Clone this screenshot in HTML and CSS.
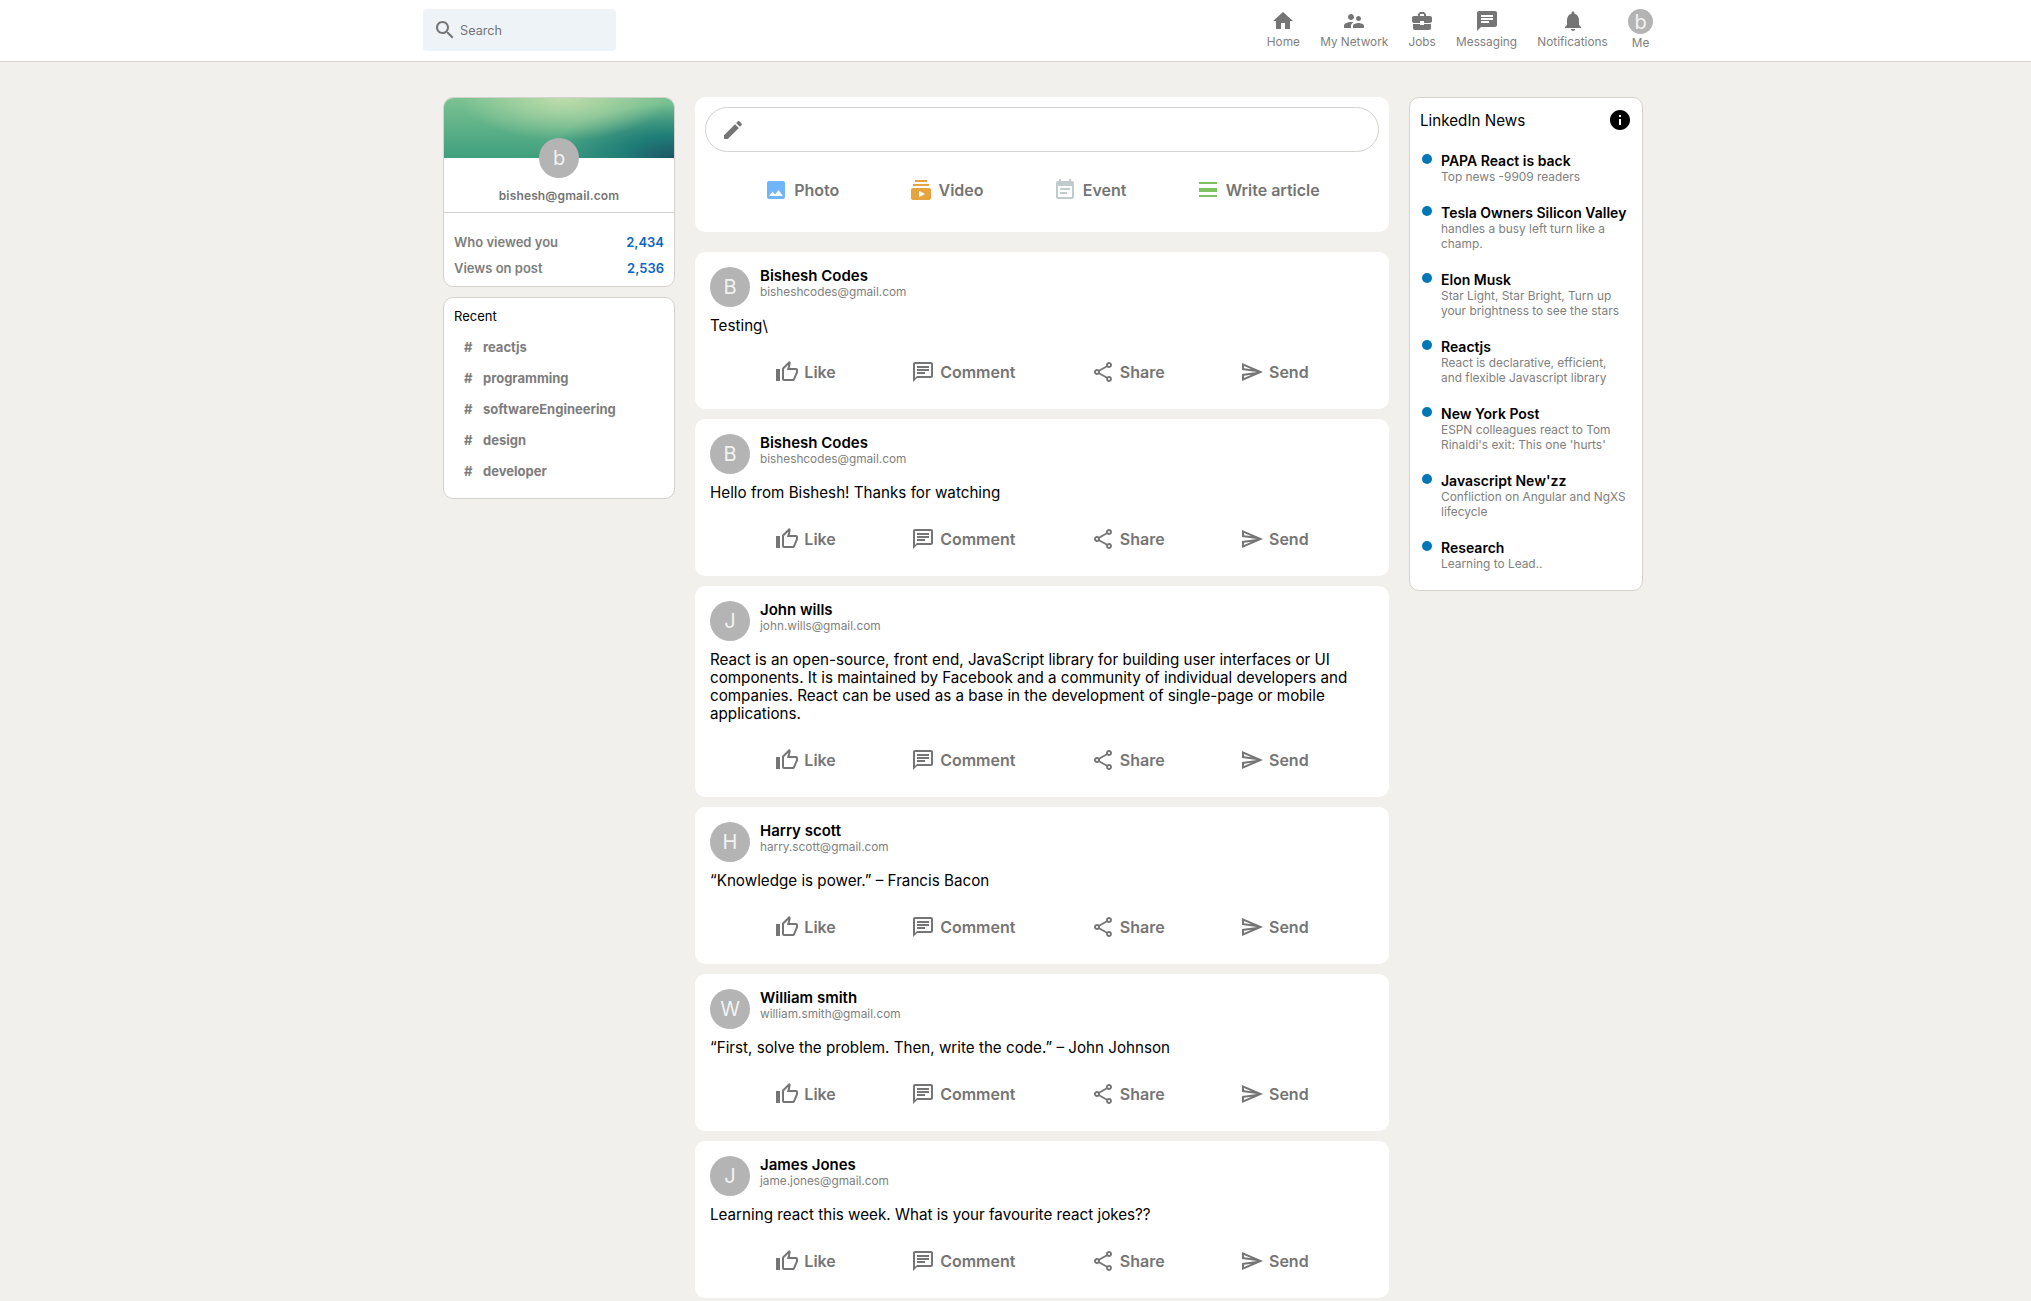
FILE: index.html
```html
<!DOCTYPE html>
<html lang="en">
<head>
<meta charset="UTF-8">
<meta name="viewport" content="width=device-width, initial-scale=1.0">
<title>LinkedIn</title>
<link rel="stylesheet" href="styles.css">
</head>
<body>
  <svg class="sprite" width="0" height="0">
    <symbol id="i-search" viewBox="0 0 24 24"><path d="M15.5 14h-.79l-.28-.27C15.41 12.59 16 11.11 16 9.5 16 5.91 13.09 3 9.5 3S3 5.91 3 9.5 5.91 16 9.5 16c1.61 0 3.09-.59 4.23-1.57l.27.28v.79l5 4.99L20.49 19l-4.99-5zm-6 0C7.01 14 5 11.99 5 9.5S7.01 5 9.5 5 14 7.01 14 9.5 11.99 14 9.5 14z"/></symbol>
    <symbol id="i-home" viewBox="0 0 24 24"><path d="M10 20v-6h4v6h5v-8h3L12 3 2 12h3v8z"/></symbol>
    <symbol id="i-network" viewBox="0 0 24 24"><path d="M16.5 12c1.38 0 2.49-1.12 2.49-2.5S17.88 7 16.5 7C15.12 7 14 8.12 14 9.5s1.12 2.5 2.5 2.5zM9 11c1.66 0 2.99-1.34 2.99-3S10.66 5 9 5C7.34 5 6 6.34 6 8s1.34 3 3 3zm7.5 3c-1.83 0-5.5.92-5.5 2.75V19h11v-2.25c0-1.83-3.67-2.75-5.5-2.75zM9 13c-2.33 0-7 1.17-7 3.5V19h7v-2.25c0-.85.33-2.34 2.37-3.47C10.5 13.1 9.66 13 9 13z"/></symbol>
    <symbol id="i-jobs" viewBox="0 0 24 24"><path d="M10 16v-1H3.01L3 19c0 1.11.89 2 2 2h14c1.11 0 2-.89 2-2v-4h-7v1h-4zm10-9h-4.01V5l-2-2h-4l-2 2v2H4c-1.1 0-2 .9-2 2v3c0 1.11.89 2 2 2h6v-2h4v2h6c1.1 0 2-.9 2-2V9c0-1.1-.9-2-2-2zm-6 0h-4V5h4v2z"/></symbol>
    <symbol id="i-chat" viewBox="0 0 24 24"><path d="M20 2H4c-1.1 0-1.99.9-1.99 2L2 22l4-4h14c1.1 0 2-.9 2-2V4c0-1.1-.9-2-2-2zM6 9h12v2H6V9zm8 5H6v-2h8v2zm4-6H6V6h12v2z"/></symbol>
    <symbol id="i-bell" viewBox="0 0 24 24"><path d="M12 22c1.1 0 2-.9 2-2h-4c0 1.1.89 2 2 2zm6-6v-5c0-3.07-1.64-5.64-4.5-6.32V4c0-.83-.67-1.5-1.5-1.5s-1.5.67-1.5 1.5v.68C7.63 5.36 6 7.92 6 11v5l-2 2v1h16v-1l-2-2z"/></symbol>
    <symbol id="i-create" viewBox="0 0 24 24"><path d="M3 17.25V21h3.75L17.81 9.94l-3.75-3.75L3 17.25zM20.71 7.04c.39-.39.39-1.02 0-1.41l-2.34-2.34c-.39-.39-1.02-.39-1.41 0l-1.83 1.83 3.75 3.75 1.83-1.83z"/></symbol>
    <symbol id="i-photo" viewBox="0 0 24 24"><path d="M21 19V5c0-1.1-.9-2-2-2H5c-1.1 0-2 .9-2 2v14c0 1.1.9 2 2 2h14c1.1 0 2-.9 2-2zM8.5 13.5l2.5 3.01L14.5 12l4.5 6H5l3.5-4.5z"/></symbol>
    <symbol id="i-video" viewBox="0 0 24 24"><path d="M20 8H4V6h16v2zm-2-6H6v2h12V2zm4 10v8c0 1.1-.9 2-2 2H4c-1.1 0-2-.9-2-2v-8c0-1.1.9-2 2-2h16c1.1 0 2 .9 2 2zm-6 4l-6-3.27v6.53L16 16z"/></symbol>
    <symbol id="i-event" viewBox="0 0 24 24"><path d="M17 10H7v2h10v-2zm2-7h-1V1h-2v2H8V1H6v2H5c-1.11 0-1.99.9-1.99 2L3 19c0 1.1.89 2 2 2h14c1.1 0 2-.9 2-2V5c0-1.1-.9-2-2-2zm0 16H5V8h14v11zm-5-5H7v2h7v-2z"/></symbol>
    <symbol id="i-article" viewBox="0 0 24 24"><path d="M3 17h18v2H3zm0-7h18v4H3zm0-6h18v2H3z"/></symbol>
    <symbol id="i-info" viewBox="0 0 24 24"><path d="M12 2C6.48 2 2 6.48 2 12s4.48 10 10 10 10-4.48 10-10S17.52 2 12 2zm1 15h-2v-6h2v6zm0-8h-2V7h2v2z"/></symbol>
    <symbol id="i-like" viewBox="0 0 24 24"><path d="M9 21h9c.83 0 1.54-.5 1.84-1.22l3.02-7.05c.09-.23.14-.47.14-.73v-2c0-1.1-.9-2-2-2h-6.31l.95-4.57.03-.32c0-.41-.17-.79-.44-1.06L14.17 1 7.58 7.59C7.22 7.95 7 8.45 7 9v10c0 1.1.9 2 2 2zM9 9l4.34-4.34L12 10h9v2l-3 7H9V9zM1 9h4v12H1z"/></symbol>
    <symbol id="i-comment" viewBox="0 0 24 24"><path d="M20 2H4c-1.1 0-2 .9-2 2v18l4-4h14c1.1 0 2-.9 2-2V4c0-1.1-.9-2-2-2zm0 14H6l-2 2V4h16v12zM6 12h8v2H6zm0-3h12v2H6zm0-3h12v2H6z"/></symbol>
    <symbol id="i-share" viewBox="0 0 24 24"><path d="M18 16.08c-.76 0-1.44.3-1.96.77L8.91 12.7c.05-.23.09-.46.09-.7s-.04-.47-.09-.7l7.05-4.11c.54.5 1.25.81 2.04.81 1.66 0 3-1.34 3-3s-1.34-3-3-3-3 1.34-3 3c0 .24.04.47.09.7L8.04 9.81C7.5 9.31 6.79 9 6 9c-1.66 0-3 1.34-3 3s1.34 3 3 3c.79 0 1.5-.31 2.04-.81l7.12 4.16c-.05.21-.08.43-.08.65 0 1.61 1.31 2.92 2.92 2.92 1.61 0 2.92-1.31 2.92-2.92s-1.31-2.92-2.92-2.92zM18 4c.55 0 1 .45 1 1s-.45 1-1 1-1-.45-1-1 .45-1 1-1zM6 13c-.55 0-1-.45-1-1s.45-1 1-1 1 .45 1 1-.45 1-1 1zm12 7.02c-.55 0-1-.45-1-1s.45-1 1-1 1 .45 1 1-.45 1-1 1z"/></symbol>
    <symbol id="i-send" viewBox="0 0 24 24"><path d="M4.01 6.03l7.51 3.22-7.52-1 .01-2.22m7.5 8.72L4 17.97v-2.22l7.51-1M2.01 3L2 10l15 2-15 2 .01 7L23 12 2.01 3z"/></symbol>
  </svg>

  <header class="header">
    <div class="search">
      <svg class="icon"><use href="#i-search"/></svg>
      <span>Search</span>
    </div>
    <nav class="nav">
      <a class="nav-item"><svg class="icon"><use href="#i-home"/></svg><span>Home</span></a>
      <a class="nav-item"><svg class="icon"><use href="#i-network"/></svg><span>My Network</span></a>
      <a class="nav-item"><svg class="icon"><use href="#i-jobs"/></svg><span>Jobs</span></a>
      <a class="nav-item"><svg class="icon"><use href="#i-chat"/></svg><span>Messaging</span></a>
      <a class="nav-item"><svg class="icon"><use href="#i-bell"/></svg><span>Notifications</span></a>
      <a class="nav-item"><div class="avatar avatar-nav">b</div><span>Me</span></a>
    </nav>
  </header>

  <main class="app">
    <aside class="sidebar">
      <div class="card profile">
        <div class="banner"></div>
        <div class="avatar avatar-profile">b</div>
        <h4 class="profile-email">bishesh@gmail.com</h4>
        <div class="stats">
          <div class="stat"><span>Who viewed you</span><b>2,434</b></div>
          <div class="stat"><span>Views on post</span><b>2,536</b></div>
        </div>
      </div>
      <div class="card recent">
        <p class="recent-title">Recent</p>
        <div class="recent-item"><span class="hash">#</span><span>reactjs</span></div>
        <div class="recent-item"><span class="hash">#</span><span>programming</span></div>
        <div class="recent-item"><span class="hash">#</span><span>softwareEngineering</span></div>
        <div class="recent-item"><span class="hash">#</span><span>design</span></div>
        <div class="recent-item"><span class="hash">#</span><span>developer</span></div>
      </div>
    </aside>

    <section class="feed">
      <div class="composer">
        <div class="composer-input"><svg class="icon"><use href="#i-create"/></svg></div>
        <div class="composer-options">
          <div class="option"><svg class="icon photo"><use href="#i-photo"/></svg><span>Photo</span></div>
          <div class="option"><svg class="icon video"><use href="#i-video"/></svg><span>Video</span></div>
          <div class="option"><svg class="icon event"><use href="#i-event"/></svg><span>Event</span></div>
          <div class="option"><svg class="icon article"><use href="#i-article"/></svg><span>Write article</span></div>
        </div>
      </div>

      <article class="post">
        <div class="post-header">
          <div class="avatar">B</div>
          <div class="post-info"><h2>Bishesh Codes</h2><p>bisheshcodes@gmail.com</p></div>
        </div>
        <p class="post-body">Testing\</p>
        <div class="post-actions">
          <div class="action"><svg class="icon"><use href="#i-like"/></svg><span>Like</span></div>
          <div class="action"><svg class="icon"><use href="#i-comment"/></svg><span>Comment</span></div>
          <div class="action"><svg class="icon"><use href="#i-share"/></svg><span>Share</span></div>
          <div class="action"><svg class="icon"><use href="#i-send"/></svg><span>Send</span></div>
        </div>
      </article>

      <article class="post">
        <div class="post-header">
          <div class="avatar">B</div>
          <div class="post-info"><h2>Bishesh Codes</h2><p>bisheshcodes@gmail.com</p></div>
        </div>
        <p class="post-body">Hello from Bishesh! Thanks for watching</p>
        <div class="post-actions">
          <div class="action"><svg class="icon"><use href="#i-like"/></svg><span>Like</span></div>
          <div class="action"><svg class="icon"><use href="#i-comment"/></svg><span>Comment</span></div>
          <div class="action"><svg class="icon"><use href="#i-share"/></svg><span>Share</span></div>
          <div class="action"><svg class="icon"><use href="#i-send"/></svg><span>Send</span></div>
        </div>
      </article>

      <article class="post">
        <div class="post-header">
          <div class="avatar">J</div>
          <div class="post-info"><h2>John wills</h2><p>john.wills@gmail.com</p></div>
        </div>
        <p class="post-body">React is an open-source, front end, JavaScript library for building user interfaces or UI components. It is maintained by Facebook and a community of individual developers and companies. React can be used as a base in the development of single-page or mobile applications.</p>
        <div class="post-actions">
          <div class="action"><svg class="icon"><use href="#i-like"/></svg><span>Like</span></div>
          <div class="action"><svg class="icon"><use href="#i-comment"/></svg><span>Comment</span></div>
          <div class="action"><svg class="icon"><use href="#i-share"/></svg><span>Share</span></div>
          <div class="action"><svg class="icon"><use href="#i-send"/></svg><span>Send</span></div>
        </div>
      </article>

      <article class="post">
        <div class="post-header">
          <div class="avatar">H</div>
          <div class="post-info"><h2>Harry scott</h2><p>harry.scott@gmail.com</p></div>
        </div>
        <p class="post-body">“Knowledge is power.” – Francis Bacon</p>
        <div class="post-actions">
          <div class="action"><svg class="icon"><use href="#i-like"/></svg><span>Like</span></div>
          <div class="action"><svg class="icon"><use href="#i-comment"/></svg><span>Comment</span></div>
          <div class="action"><svg class="icon"><use href="#i-share"/></svg><span>Share</span></div>
          <div class="action"><svg class="icon"><use href="#i-send"/></svg><span>Send</span></div>
        </div>
      </article>

      <article class="post">
        <div class="post-header">
          <div class="avatar">W</div>
          <div class="post-info"><h2>William smith</h2><p>william.smith@gmail.com</p></div>
        </div>
        <p class="post-body">“First, solve the problem. Then, write the code.” – John Johnson</p>
        <div class="post-actions">
          <div class="action"><svg class="icon"><use href="#i-like"/></svg><span>Like</span></div>
          <div class="action"><svg class="icon"><use href="#i-comment"/></svg><span>Comment</span></div>
          <div class="action"><svg class="icon"><use href="#i-share"/></svg><span>Share</span></div>
          <div class="action"><svg class="icon"><use href="#i-send"/></svg><span>Send</span></div>
        </div>
      </article>

      <article class="post">
        <div class="post-header">
          <div class="avatar">J</div>
          <div class="post-info"><h2>James Jones</h2><p>jame.jones@gmail.com</p></div>
        </div>
        <p class="post-body">Learning react this week. What is your favourite react jokes??</p>
        <div class="post-actions">
          <div class="action"><svg class="icon"><use href="#i-like"/></svg><span>Like</span></div>
          <div class="action"><svg class="icon"><use href="#i-comment"/></svg><span>Comment</span></div>
          <div class="action"><svg class="icon"><use href="#i-share"/></svg><span>Share</span></div>
          <div class="action"><svg class="icon"><use href="#i-send"/></svg><span>Send</span></div>
        </div>
      </article>
    </section>

    <aside class="card widgets">
      <div class="widgets-header">
        <h2>LinkedIn News</h2>
        <svg class="icon"><use href="#i-info"/></svg>
      </div>
      <div class="news"><span class="dot"></span><div><h4>PAPA React is back</h4><p>Top news -9909 readers</p></div></div>
      <div class="news"><span class="dot"></span><div><h4>Tesla Owners Silicon Valley</h4><p>handles a busy left turn like a champ.</p></div></div>
      <div class="news"><span class="dot"></span><div><h4>Elon Musk</h4><p>Star Light, Star Bright, Turn up your brightness to see the stars</p></div></div>
      <div class="news"><span class="dot"></span><div><h4>Reactjs</h4><p>React is declarative, efficient, and flexible Javascript library</p></div></div>
      <div class="news"><span class="dot"></span><div><h4>New York Post</h4><p>ESPN colleagues react to Tom Rinaldi's exit: This one 'hurts'</p></div></div>
      <div class="news"><span class="dot"></span><div><h4>Javascript New'zz</h4><p>Confliction on Angular and NgXS lifecycle</p></div></div>
      <div class="news"><span class="dot"></span><div><h4>Research</h4><p>Learning to Lead..</p></div></div>
    </aside>
  </main>
</body>
</html>
```

FILE: styles.css
```css
* {
  margin: 0;
  box-sizing: border-box;
}
html,
body {
  height: 100vh;
  overflow: hidden;
}
body {
  font-family: Inter, "Liberation Sans", sans-serif;
  background-color: #f1f0ec;
}
.sprite {
  position: absolute;
}
.icon {
  width: 24px;
  height: 24px;
  fill: #757575;
  flex-shrink: 0;
}

/* header */
.header {
  display: flex;
  justify-content: space-between;
  height: 62px;
  padding: 9px 378px 0 423px;
  background-color: #fff;
  border-bottom: 1px solid #d6d5d1;
}
.search {
  display: flex;
  align-items: center;
  gap: 3px;
  width: 193px;
  height: 42px;
  padding-left: 10px;
  background-color: #eef3f8;
  border-radius: 4px;
  color: #757575;
  font-size: 12.7px;
}
.nav {
  display: flex;
  gap: 20.3px;
}
.nav-item {
  display: flex;
  flex-direction: column;
  align-items: center;
  color: #808080;
  font-size: 11.8px;
}
.nav-item span {
  margin-top: 2px;
  line-height: 14px;
}

/* avatars */
.avatar {
  display: flex;
  align-items: center;
  justify-content: center;
  width: 40px;
  height: 40px;
  border-radius: 50%;
  background-color: #b4b4b4;
  color: #f2f2f2;
  font-size: 20px;
  flex-shrink: 0;
}
.avatar-nav {
  width: 25px;
  height: 25px;
  font-size: 20px;
}
.avatar-profile {
  margin: -20px auto 0;
}

/* layout */
.app {
  display: grid;
  grid-template-columns: 232px 694px 234px;
  column-gap: 20px;
  align-items: start;
  margin-top: 35px;
  padding-left: 443px;
}
.card {
  background-color: #fff;
  border: 1px solid #d3d2ce;
  border-radius: 10px;
}

/* left sidebar */
.profile {
  overflow: hidden;
}
.banner {
  height: 60px;
  background:
    radial-gradient(ellipse 45% 70% at 52% 0%, #bfdcaa 0%, rgba(191, 220, 170, 0) 100%),
    radial-gradient(ellipse 55% 90% at 100% 100%, #1d5566 0%, #1f7d77 40%, rgba(31, 125, 119, 0) 100%),
    linear-gradient(#7cc292, #3f9f7e);
}
.profile-email {
  padding: 10px 0 8px;
  text-align: center;
  color: #757575;
  font-size: 12px;
  font-weight: 600;
  letter-spacing: 0.15px;
  line-height: 16px;
  border-bottom: 1px solid #d3d2ce;
}
.stats {
  padding: 19px 10px 2px;
}
.stat {
  display: flex;
  justify-content: space-between;
  height: 26px;
  color: #7d7d7d;
  font-size: 13px;
  font-weight: 600;
  line-height: 20px;
}
.stat b {
  color: #0a66c2;
  font-weight: 600;
}
.recent {
  margin-top: 10px;
  padding: 10px 10px 5px;
  height: 202px;
}
.recent-title {
  font-size: 13px;
  line-height: 16px;
  margin-bottom: 7px;
}
.recent-item {
  display: flex;
  height: 31px;
  align-items: center;
  padding-left: 10px;
  color: #7d7d7d;
  font-size: 13px;
  font-weight: 700;
}
.hash {
  width: 19px;
}

/* feed */
.composer {
  height: 135px;
  padding: 10px;
  background-color: #fff;
  border-radius: 10px;
  margin-bottom: 20px;
}
.composer-input {
  display: flex;
  align-items: center;
  height: 45px;
  padding-left: 15px;
  border: 1px solid #d3d2ce;
  border-radius: 30px;
}
.composer-options {
  display: flex;
  justify-content: space-evenly;
  margin: 26px -10px 0;
}
.option {
  display: flex;
  align-items: center;
  gap: 6px;
  color: #757575;
  font-size: 16px;
  font-weight: 600;
}
.photo {
  fill: #70b5f9;
}
.video {
  fill: #e7a33e;
}
.event {
  fill: #c0cbcd;
}
.article {
  fill: #7fc15e;
}

.post {
  padding: 15px;
  background-color: #fff;
  border-radius: 10px;
  margin-bottom: 10px;
}
.post-header {
  display: flex;
  margin-bottom: 10px;
}
.post-info {
  margin-left: 10px;
}
.post-info h2 {
  font-size: 15px;
  font-weight: 600;
  line-height: 18px;
}
.post-info p {
  font-size: 11.8px;
  line-height: 14px;
  color: #808080;
}
.post-body {
  font-size: 15.2px;
  line-height: 18px;
  margin-bottom: 15px;
}
.post-actions {
  display: flex;
  justify-content: space-evenly;
}
.action {
  display: flex;
  align-items: center;
  gap: 5px;
  padding: 10px;
  color: #757575;
  font-size: 16px;
  font-weight: 600;
}

/* right column */
.widgets {
  padding-bottom: 9px;
}
.widgets-header {
  display: flex;
  align-items: center;
  justify-content: space-between;
  padding: 10px;
}
.widgets-header h2 {
  font-size: 15.2px;
  font-weight: 400;
}
.widgets-header .icon {
  fill: #000;
}
.news {
  display: flex;
  padding: 10px 14px 10px 12px;
}
.dot {
  width: 10px;
  height: 10px;
  margin: 2px 9px 0 0;
  border-radius: 50%;
  background-color: #0177b7;
  flex-shrink: 0;
}
.news h4 {
  font-size: 14px;
  font-weight: 600;
  line-height: 17px;
}
.news p {
  font-size: 11.9px;
  line-height: 15px;
  color: #808080;
}
```
